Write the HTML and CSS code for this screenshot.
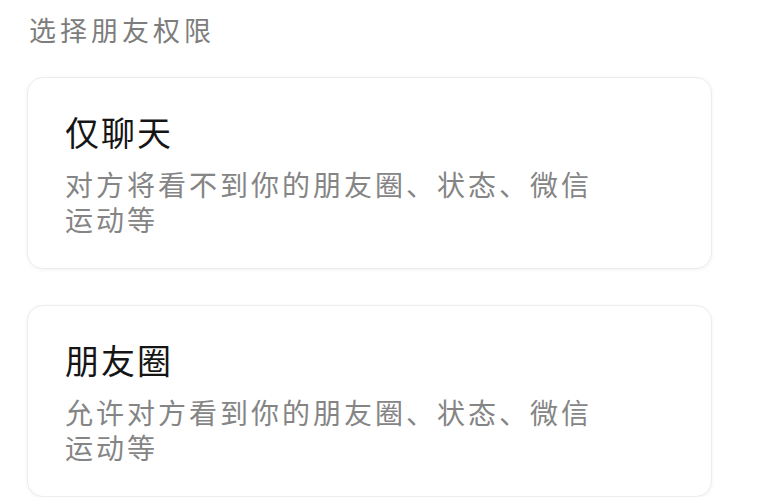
FILE: index.html
```html
<!DOCTYPE html>
<html>
<head>
    <link rel="stylesheet" href="styles.css">
</head>
<body>

    <div class="page">
        <h1 class="section-title">选择朋友权限</h1>

        <div class="option">
            <h2 class="option-name">仅聊天</h2>
            <p class="option-desc">对方将看不到你的朋友圈、状态、微信运动等</p>
        </div>

        <div class="option">
            <h2 class="option-name">朋友圈</h2>
            <p class="option-desc">允许对方看到你的朋友圈、状态、微信运动等</p>
        </div>
    </div>

</body>
</html>
```

FILE: styles.css
```css
body { margin: 0; background: #fff; font-family: "Noto Sans CJK SC", "Noto Sans", sans-serif; }
.page { padding: 10px 57px 0 27px; display: flex; flex-direction: column; gap: 36px; }
.section-title { margin: 0 0 0 2px; font-size: 27px; font-weight: normal; line-height: 40px; letter-spacing: 4px; color: #7d7d7d; }
.option { height: 192px; box-sizing: border-box; padding: 31px 36px 0 36px; background: #fff; border: 1px solid #ececec; border-radius: 16px; box-shadow: 0 1px 4px rgba(0, 0, 0, 0.05); }
.option:first-of-type { margin-top: -9px; }
.option-name { margin: 0 0 0 1px; font-size: 34px; font-weight: normal; line-height: 46px; letter-spacing: 2px; color: #151515; }
.option-desc { margin: 12px 0 0 1px; max-width: 540px; font-size: 28px; line-height: 35px; letter-spacing: 3px; color: #858585; }
```
